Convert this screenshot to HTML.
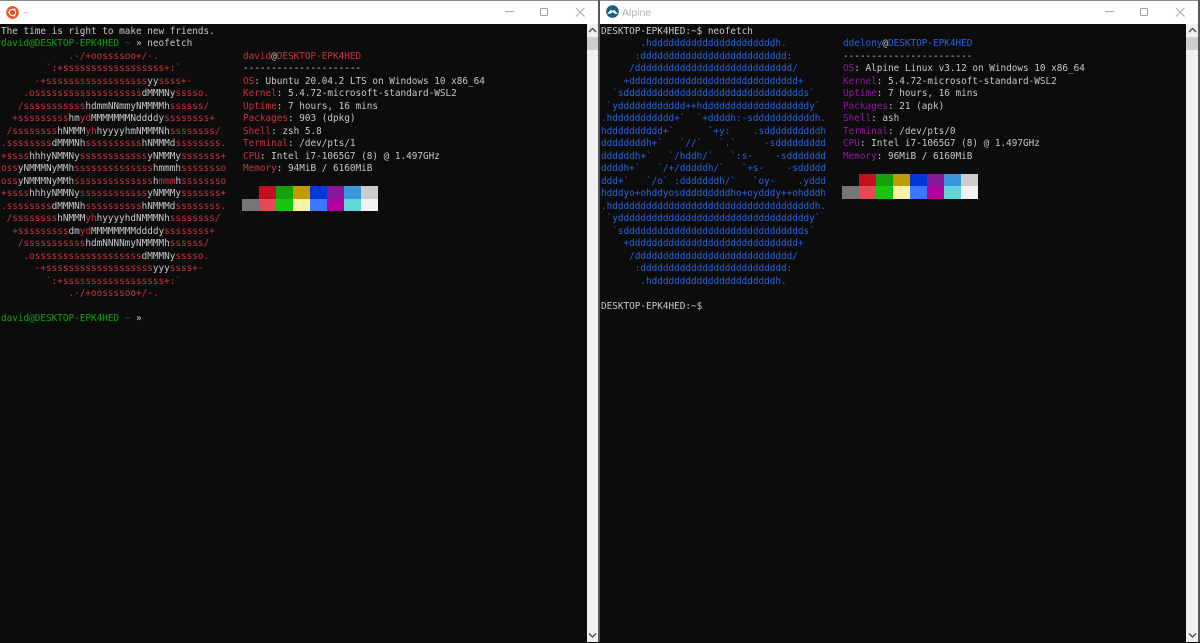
<!DOCTYPE html>
<html><head><meta charset="utf-8"><style>
html,body{margin:0;padding:0;background:#0c0c0c;width:1200px;height:642px;overflow:hidden}
*{box-sizing:border-box}
.abs{position:absolute}
pre{position:absolute;margin:0;font-family:"DejaVu Sans Mono","Liberation Mono",monospace;font-size:9.36px;line-height:12.5px;color:#c8c8c8;white-space:pre;filter:blur(.25px)}
.r{color:#c9323f}.g{color:#13a10e}.b{color:#2a62dc}.p{color:#94189f}.n{color:#2a4fa0}
.title{position:absolute;top:1px;height:23px;background:#fff}
.tt{position:absolute;top:7px;font:9.5px "Liberation Sans",sans-serif;color:#a8a8a8}
.sb{position:absolute;top:24px;height:618px;background:#f0f0f0}
.th{position:absolute;left:0;top:13px;width:100%;height:13px;background:#cdcdcd}
.c{position:absolute;width:17px;height:12.5px}
</style></head><body>
<div class="abs" style="left:0;top:0;width:1200px;height:1px;background:#8a8a8a"></div>
<div class="title" style="left:0;width:598px"></div>
<div class="title" style="left:600px;width:600px"></div>
<div class="abs" style="left:598px;top:0;width:2px;height:642px;background:#555"></div>
<div class="abs" style="left:1198px;top:0;width:2px;height:642px;background:#555"></div>

<svg class="abs" style="left:6px;top:5.500px" width="13" height="13" viewBox="0 0 14 14"><circle cx="7" cy="7" r="6.800" fill="#e95420"/><circle cx="7" cy="7" r="3.400" fill="none" stroke="#fff" stroke-width="1.200"/><circle cx="3.100" cy="7" r="1" fill="#fff"/><circle cx="9" cy="3.600" r="1" fill="#fff"/><circle cx="9" cy="10.400" r="1" fill="#fff"/></svg>
<div class="tt" style="left:23px">–</div>
<svg class="abs" style="left:505px;top:7px" width="80" height="12" viewBox="0 0 80 12" fill="none" stroke="#ababab" stroke-width="1"><path d="M0 4.500H9"/><path d="M35.500 1.500h7v7h-7z"/><path d="M71 1l8.500 8.500M79.500 1L71 9.500"/></svg>
<svg class="abs" style="left:1105px;top:7px" width="80" height="12" viewBox="0 0 80 12" fill="none" stroke="#ababab" stroke-width="1"><path d="M0 4.500H9"/><path d="M35.500 1.500h7v7h-7z"/><path d="M71 1l8.500 8.500M79.500 1L71 9.500"/></svg>
<svg class="abs" style="left:606px;top:5px" width="13" height="13" viewBox="0 0 13 13"><circle cx="6.500" cy="6.500" r="6.300" fill="#1b5d80"/><path d="M1.800 8.500L5 5.200 6.500 6.600 8 5.200 11.200 8.500 8.800 8.500 6.500 6.800 4.200 8.500z" fill="#fff" stroke="#fff" stroke-width=".6"/></svg>
<div class="tt" style="left:622px;top:6.500px;font-size:10.500px;color:#b4b4b4">Alpine</div>

<div class="abs" style="left:0;top:23.500px;width:587px;height:619px;background:#0c0c0c"></div>
<div class="abs" style="left:600px;top:23.500px;width:587px;height:619px;background:#0c0c0c"></div>
<div class="sb" style="left:587px;width:11px"><div class="th"></div></div>
<div class="sb" style="left:1186px;width:12px"><div class="th"></div></div>
<svg class="abs" style="left:588px;top:27px" width="9" height="7"><path d="M1 5l3.500-3.500L8 5" fill="none" stroke="#505050" stroke-width="1.400"/></svg>
<svg class="abs" style="left:1188px;top:27px" width="9" height="7"><path d="M1 5l3.500-3.500L8 5" fill="none" stroke="#505050" stroke-width="1.400"/></svg>
<svg class="abs" style="left:588px;top:632px" width="9" height="7"><path d="M1 1.500l3.500 3.500L8 1.500" fill="none" stroke="#505050" stroke-width="1.400"/></svg>
<svg class="abs" style="left:1188px;top:632px" width="9" height="7"><path d="M1 1.500l3.500 3.500L8 1.500" fill="none" stroke="#505050" stroke-width="1.400"/></svg>

<pre style="left:1px;top:25.500px">The time is right to make new friends.
<span class="g">david@DESKTOP-EPK4HED</span> <span class="n">~</span> » neofetch
<span class="r">            .-/+oossssoo+/-.
        `:+ssssssssssssssssss+:`
      -+ssssssssssssssssss</span>yy<span class="r">ssss+-
    .osssssssssssssssssss</span>dMMMNy<span class="r">sssso.
   /sssssssssss</span>hdmmNNmmyNMMMMh<span class="r">ssssss/
  +sssssssss</span>hm<span class="r">yd</span>MMMMMMMNddddy<span class="r">ssssssss+
 /ssssssss</span>hNMMM<span class="r">yh</span>hyyyyhmNMMMNh<span class="r">ssssssss/
.ssssssss</span>dMMMNh<span class="r">ssssssssss</span>hNMMMd<span class="r">ssssssss.
+ssss</span>hhhyNMMNy<span class="r">ssssssssssss</span>yNMMMy<span class="r">sssssss+
oss</span>yNMMMNyMMh<span class="r">ssssssssssssss</span>hmmmh<span class="r">ssssssso
oss</span>yNMMMNyMMh<span class="r">ssssssssssssss</span>h<span class="r">mmm</span>h<span class="r">ssssssso
+ssss</span>hhhyNMMNy<span class="r">ssssssssssss</span>yNMMMy<span class="r">sssssss+
.ssssssss</span>dMMMNh<span class="r">ssssssssss</span>hNMMMd<span class="r">ssssssss.
 /ssssssss</span>hNMMM<span class="r">yh</span>hyyyyhdNMMMNh<span class="r">ssssssss/
  +sssssssss</span>dm<span class="r">yd</span>MMMMMMMMddddy<span class="r">ssssssss+
   /sssssssssss</span>hdmNNNNmyNMMMMh<span class="r">ssssss/
    .osssssssssssssssssss</span>dMMMNy<span class="r">sssso.
      -+sssssssssssssssssss</span>yyy<span class="r">ssss+-
        `:+ssssssssssssssssss+:`
            .-/+oossssoo+/-.</span>

<span class="g">david@DESKTOP-EPK4HED</span> <span class="n">~</span> »</pre>

<pre style="left:243px;top:50.500px"><span class="r">david</span>@<span class="r">DESKTOP-EPK4HED</span>
---------------------
<span class="r">OS</span>: Ubuntu 20.04.2 LTS on Windows 10 x86_64
<span class="r">Kernel</span>: 5.4.72-microsoft-standard-WSL2
<span class="r">Uptime</span>: 7 hours, 16 mins
<span class="r">Packages</span>: 903 (dpkg)
<span class="r">Shell</span>: zsh 5.8
<span class="r">Terminal</span>: /dev/pts/1
<span class="r">CPU</span>: Intel i7-1065G7 (8) @ 1.497GHz
<span class="r">Memory</span>: 94MiB / 6160MiB</pre>

<pre style="left:601px;top:25.500px">DESKTOP-EPK4HED:~$ neofetch
<span class="b">       .hddddddddddddddddddddddh.
      :dddddddddddddddddddddddddd:
     /dddddddddddddddddddddddddddd/
    +dddddddddddddddddddddddddddddd+
  `sdddddddddddddddddddddddddddddddds`
 `ydddddddddddd++hdddddddddddddddddddy`
.hddddddddddd+`  `+ddddh:-sdddddddddddh.
hdddddddddd+`      `+y:    .sddddddddddh
ddddddddh+`   `//`   `.`     -sddddddddd
ddddddh+`   `/hddh/`   `:s-    -sddddddd
ddddh+`   `/+/dddddh/`   `+s-    -sddddd
ddd+`   `/o` :dddddddh/`   `oy-    .yddd
hdddyo+ohddyosdddddddddho+oydddy++ohdddh
.hddddddddddddddddddddddddddddddddddddh.
 `yddddddddddddddddddddddddddddddddddy`
  `sdddddddddddddddddddddddddddddddds`
    +dddddddddddddddddddddddddddddd+
     /dddddddddddddddddddddddddddd/
      :dddddddddddddddddddddddddd:
       .hddddddddddddddddddddddh.</span>

DESKTOP-EPK4HED:~$</pre>

<pre style="left:843px;top:38px"><span class="b">ddelony</span>@<span class="b">DESKTOP-EPK4HED</span>
-----------------------
<span class="p">OS</span>: Alpine Linux v3.12 on Windows 10 x86_64
<span class="p">Kernel</span>: 5.4.72-microsoft-standard-WSL2
<span class="p">Uptime</span>: 7 hours, 16 mins
<span class="p">Packages</span>: 21 (apk)
<span class="p">Shell</span>: ash
<span class="p">Terminal</span>: /dev/pts/0
<span class="p">CPU</span>: Intel i7-1065G7 (8) @ 1.497GHz
<span class="p">Memory</span>: 96MiB / 6160MiB</pre>

<div class="abs" style="left:242px;top:186px;width:136px;height:25px">
<i class="c" style="left:17px;top:0;background:#c50f1f"></i><i class="c" style="left:34px;top:0;background:#13a10e"></i><i class="c" style="left:51px;top:0;background:#c19c00"></i><i class="c" style="left:68px;top:0;background:#0037da"></i><i class="c" style="left:85px;top:0;background:#881798"></i><i class="c" style="left:102px;top:0;background:#3a96dd"></i><i class="c" style="left:119px;top:0;background:#ccc"></i>
<i class="c" style="left:0;top:12.500px;background:#767676"></i><i class="c" style="left:17px;top:12.500px;background:#e74856"></i><i class="c" style="left:34px;top:12.500px;background:#16c60c"></i><i class="c" style="left:51px;top:12.500px;background:#f9f1a5"></i><i class="c" style="left:68px;top:12.500px;background:#3b78ff"></i><i class="c" style="left:85px;top:12.500px;background:#b4009e"></i><i class="c" style="left:102px;top:12.500px;background:#61d6d6"></i><i class="c" style="left:119px;top:12.500px;background:#f2f2f2"></i>
</div>
<div class="abs" style="left:842px;top:173.500px;width:136px;height:25px">
<i class="c" style="left:17px;top:0;background:#c50f1f"></i><i class="c" style="left:34px;top:0;background:#13a10e"></i><i class="c" style="left:51px;top:0;background:#c19c00"></i><i class="c" style="left:68px;top:0;background:#0037da"></i><i class="c" style="left:85px;top:0;background:#881798"></i><i class="c" style="left:102px;top:0;background:#3a96dd"></i><i class="c" style="left:119px;top:0;background:#ccc"></i>
<i class="c" style="left:0;top:12.500px;background:#767676"></i><i class="c" style="left:17px;top:12.500px;background:#e74856"></i><i class="c" style="left:34px;top:12.500px;background:#16c60c"></i><i class="c" style="left:51px;top:12.500px;background:#f9f1a5"></i><i class="c" style="left:68px;top:12.500px;background:#3b78ff"></i><i class="c" style="left:85px;top:12.500px;background:#b4009e"></i><i class="c" style="left:102px;top:12.500px;background:#61d6d6"></i><i class="c" style="left:119px;top:12.500px;background:#f2f2f2"></i>
</div>
</body></html>
